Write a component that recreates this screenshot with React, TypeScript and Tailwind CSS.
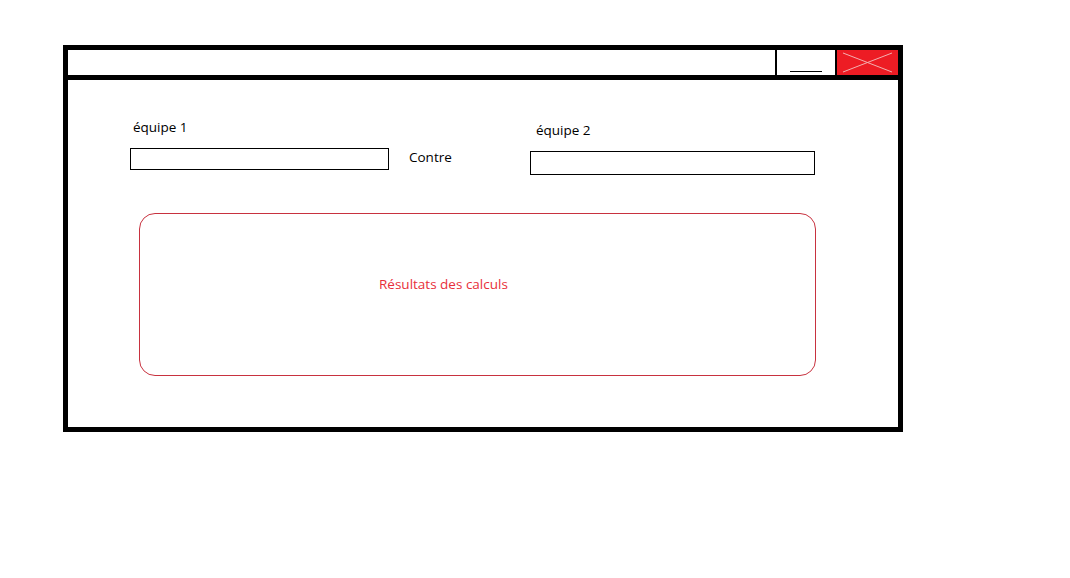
import React from "react";

export default function App() {
  const font = { fontFamily: '"Open Sans", "Noto Sans", sans-serif' };
  return (
    <div className="w-[1070px] h-[578px] bg-white overflow-hidden" style={font}>
      <div className="ml-[63px] mt-[45px] w-[840px] h-[387px] border-[5px] border-black flex flex-col bg-white">
        {/* title bar */}
        <div className="h-[30px] flex border-b-[5px] border-black shrink-0">
          <div className="flex-1" />
          <div className="w-[60px] border-l-[2px] border-black flex items-end justify-center pb-[3px]">
            <div className="w-[32px] h-[1px] bg-black" />
          </div>
          <div className="w-[63px] border-l-[2px] border-black bg-[#ed1c24]">
            <svg width="61" height="25" viewBox="0 0 61 25" className="block">
              <line x1="6" y1="3" x2="55" y2="22" stroke="#f3b0b0" strokeWidth="1" />
              <line x1="6" y1="22" x2="55" y2="3" stroke="#f3b0b0" strokeWidth="1" />
            </svg>
          </div>
        </div>
        {/* content */}
        <div className="flex-1 flex flex-col">
          <div className="flex items-start pt-[37px] text-[13.5px] leading-[18px] text-black">
            <div className="ml-[62px] w-[259px] flex flex-col">
              <span className="pl-[3px] pt-[1px]">équipe 1</span>
              <div className="mt-[12px] h-[22px] border border-black" />
            </div>
            <div className="ml-[20px] w-[121px] mt-[31px]">Contre</div>
            <div className="w-[285px] flex flex-col mt-[3px]">
              <span className="pl-[6px] pt-[1px]">équipe 2</span>
              <div className="mt-[12px] h-[24px] border border-black" />
            </div>
          </div>
          <div className="ml-[71px] mt-[38px] w-[677px] h-[163px] border border-[#c8323f] rounded-[16px] pl-[239px] pt-[57px]">
            <span className="text-[13.5px] leading-[18px] text-[#e8303a]">Résultats des calculs</span>
          </div>
        </div>
      </div>
    </div>
  );
}
